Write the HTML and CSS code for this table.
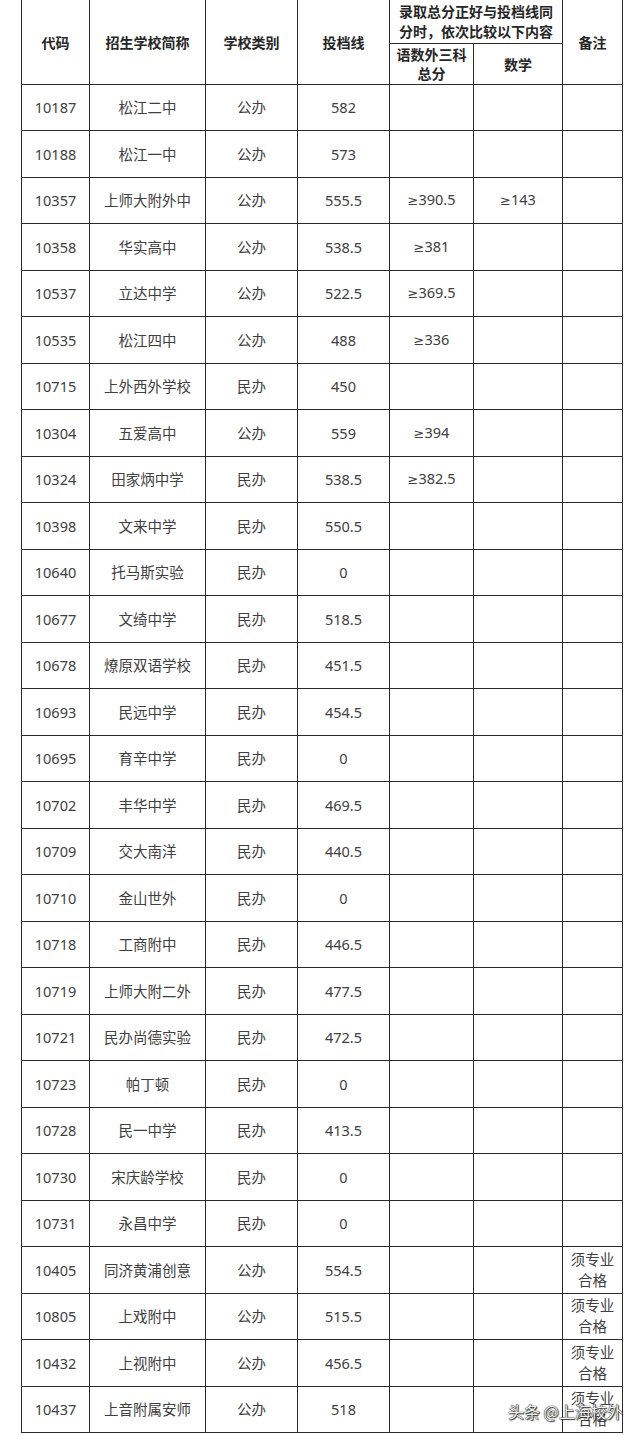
FILE: index.html
```html
<!DOCTYPE html>
<html lang="zh">
<head>
<meta charset="utf-8">
<link rel="stylesheet" href="styles.css">
</head>
<body>
<div class="page">
<table class="score">
<colgroup>
<col class="c1"><col class="c2"><col class="c3"><col class="c4"><col class="c5"><col class="c6"><col class="c7">
</colgroup>
<thead>
<tr class="h1">
<th rowspan="2">代码</th>
<th rowspan="2">招生学校简称</th>
<th rowspan="2">学校类别</th>
<th rowspan="2">投档线</th>
<th colspan="2" class="wide">录取总分正好与投档线同分时，依次比较以下内容</th>
<th rowspan="2">备注</th>
</tr>
<tr class="h2">
<th class="sub">语数外三科总分</th>
<th>数学</th>
</tr>
</thead>
<tbody>
<tr><td>10187</td><td>松江二中</td><td>公办</td><td>582</td><td></td><td></td><td></td></tr>
<tr><td>10188</td><td>松江一中</td><td>公办</td><td>573</td><td></td><td></td><td></td></tr>
<tr><td>10357</td><td>上师大附外中</td><td>公办</td><td>555.5</td><td><span class="ge">≥</span>390.5</td><td><span class="ge">≥</span>143</td><td></td></tr>
<tr><td>10358</td><td>华实高中</td><td>公办</td><td>538.5</td><td><span class="ge">≥</span>381</td><td></td><td></td></tr>
<tr><td>10537</td><td>立达中学</td><td>公办</td><td>522.5</td><td><span class="ge">≥</span>369.5</td><td></td><td></td></tr>
<tr><td>10535</td><td>松江四中</td><td>公办</td><td>488</td><td><span class="ge">≥</span>336</td><td></td><td></td></tr>
<tr><td>10715</td><td>上外西外学校</td><td>民办</td><td>450</td><td></td><td></td><td></td></tr>
<tr><td>10304</td><td>五爱高中</td><td>公办</td><td>559</td><td><span class="ge">≥</span>394</td><td></td><td></td></tr>
<tr><td>10324</td><td>田家炳中学</td><td>民办</td><td>538.5</td><td><span class="ge">≥</span>382.5</td><td></td><td></td></tr>
<tr><td>10398</td><td>文来中学</td><td>民办</td><td>550.5</td><td></td><td></td><td></td></tr>
<tr><td>10640</td><td>托马斯实验</td><td>民办</td><td>0</td><td></td><td></td><td></td></tr>
<tr><td>10677</td><td>文绮中学</td><td>民办</td><td>518.5</td><td></td><td></td><td></td></tr>
<tr><td>10678</td><td>燎原双语学校</td><td>民办</td><td>451.5</td><td></td><td></td><td></td></tr>
<tr><td>10693</td><td>民远中学</td><td>民办</td><td>454.5</td><td></td><td></td><td></td></tr>
<tr><td>10695</td><td>育辛中学</td><td>民办</td><td>0</td><td></td><td></td><td></td></tr>
<tr><td>10702</td><td>丰华中学</td><td>民办</td><td>469.5</td><td></td><td></td><td></td></tr>
<tr><td>10709</td><td>交大南洋</td><td>民办</td><td>440.5</td><td></td><td></td><td></td></tr>
<tr><td>10710</td><td>金山世外</td><td>民办</td><td>0</td><td></td><td></td><td></td></tr>
<tr><td>10718</td><td>工商附中</td><td>民办</td><td>446.5</td><td></td><td></td><td></td></tr>
<tr><td>10719</td><td>上师大附二外</td><td>民办</td><td>477.5</td><td></td><td></td><td></td></tr>
<tr><td>10721</td><td>民办尚德实验</td><td>民办</td><td>472.5</td><td></td><td></td><td></td></tr>
<tr><td>10723</td><td>帕丁顿</td><td>民办</td><td>0</td><td></td><td></td><td></td></tr>
<tr><td>10728</td><td>民一中学</td><td>民办</td><td>413.5</td><td></td><td></td><td></td></tr>
<tr><td>10730</td><td>宋庆龄学校</td><td>民办</td><td>0</td><td></td><td></td><td></td></tr>
<tr><td>10731</td><td>永昌中学</td><td>民办</td><td>0</td><td></td><td></td><td></td></tr>
<tr><td>10405</td><td>同济黄浦创意</td><td>公办</td><td>554.5</td><td></td><td></td><td class="note">须专业合格</td></tr>
<tr><td>10805</td><td>上戏附中</td><td>公办</td><td>515.5</td><td></td><td></td><td class="note">须专业合格</td></tr>
<tr><td>10432</td><td>上视附中</td><td>公办</td><td>456.5</td><td></td><td></td><td class="note">须专业合格</td></tr>
<tr><td>10437</td><td>上音附属安师</td><td>公办</td><td>518</td><td></td><td></td><td class="note">须专业合格</td></tr>
</tbody>
</table>
<div class="watermark">头条 @上海校外</div>
</div>
</body>
</html>
```

FILE: styles.css
```css
html, body {
  margin: 0;
  padding: 0;
  background: #ffffff;
}
body {
  font-family: "Noto Sans", "Noto Sans CJK SC", sans-serif;
  font-size: 14.5px;
  color: #3c3c3c;
}
.page {
  position: relative;
  width: 640px;
  height: 1435px;
  overflow: hidden;
  background: #fff;
}
.score {
  margin-left: 21px;
  width: 601px;
  table-layout: fixed;
  border-collapse: collapse;
}
.c1 { width: 68px; }
.c2 { width: 116px; }
.c3 { width: 92px; }
.c4 { width: 92px; }
.c5 { width: 84px; }
.c6 { width: 89px; }
.c7 { width: 60px; }
.score th,
.score td {
  border: 1px solid #2a2a2a;
  text-align: center;
  vertical-align: middle;
  padding: 0;
  line-height: 20px;
}
.score thead tr:first-child th {
  border-top: none;
}
.score th {
  font-family: "Noto Sans CJK SC", sans-serif;
  font-weight: bold;
  color: #262626;
  font-size: 14px;
}
.score .h1 { height: 43px; }
.score .h2 { height: 41px; }
.score .wide {
  padding: 0 8px;
  line-height: 20px;
}
.score .sub {
  padding: 0 4px;
  line-height: 19px;
}
.score tbody tr {
  height: 46.5px;
}
.score td {
  color: #404040;
}
.ge {
  font-family: "DejaVu Sans", sans-serif;
  font-size: 13px;
}
.score .note {
  line-height: 21px;
  padding: 0 7px;
}
.watermark {
  position: absolute;
  left: 508px;
  top: 1399px;
  font-family: "Noto Sans CJK SC", sans-serif;
  font-size: 16px;
  line-height: 24px;
  color: #f2f2f2;
  white-space: nowrap;
  text-shadow: 0 0 1px #222, 0 0 1px #222, 1px 1px 1px #333;
}
```
